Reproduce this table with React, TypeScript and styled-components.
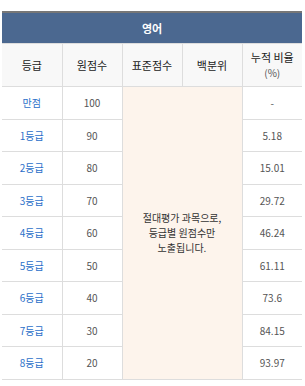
import React from 'react';
import styled, { createGlobalStyle } from 'styled-components';

const GlobalStyle = createGlobalStyle`
    body {
        margin: 0;
        background: #fff;
        font-family: "Noto Sans CJK KR", "Noto Sans", sans-serif;
    }
`

const Wrap = styled.div`
    padding: 11px 0 0 2px;
`

const Table = styled.table`
    width: 300px;
    border-collapse: collapse;
    table-layout: fixed;
    border-top: 2px solid #777;
`

const TitleCell = styled.th`
    height: 30px;
    padding: 0;
    background: #4b6890;
    color: #fff;
    font-size: 11px;
    font-weight: bold;
    text-align: center;
    border-bottom: 1px solid #ddd;
`

const HeadCell = styled.th`
    height: 42px;
    padding: 0;
    background: #f8f8f8;
    color: #222;
    font-size: 11px;
    font-weight: normal;
    line-height: 15px;
    text-align: center;
    border-bottom: 1px solid #ddd;
    & + & {
        border-left: 1px solid #ddd;
    }
`

const Small = styled.span`
    display: block;
    font-size: 10px;
    color: #555;
`

const Cell = styled.td<{ $link?: boolean }>`
    height: 31.5px;
    padding: 0;
    font-size: 10px;
    text-align: center;
    color: ${p => (p.$link ? '#2b6fc9' : '#555')};
    border-bottom: 1px solid #ddd;
    &:not(:first-child) {
        border-left: 1px solid #ddd;
    }
`

const NoteCell = styled.td`
    padding: 0;
    background: #fdf4ec;
    color: #333;
    font-size: 10px;
    line-height: 15px;
    text-align: center;
    border-left: 1px solid #ddd;
    border-bottom: 1px solid #ddd;
`

const rows = [
    { grade: '만점', raw: 100, ratio: '-' },
    { grade: '1등급', raw: 90, ratio: '5.18' },
    { grade: '2등급', raw: 80, ratio: '15.01' },
    { grade: '3등급', raw: 70, ratio: '29.72' },
    { grade: '4등급', raw: 60, ratio: '46.24' },
    { grade: '5등급', raw: 50, ratio: '61.11' },
    { grade: '6등급', raw: 40, ratio: '73.6' },
    { grade: '7등급', raw: 30, ratio: '84.15' },
    { grade: '8등급', raw: 20, ratio: '93.97' },
]

function App() {
    return (
        <Wrap>
            <GlobalStyle/>
            <Table>
                <thead>
                    <tr>
                        <TitleCell colSpan={5}>영어</TitleCell>
                    </tr>
                    <tr>
                        <HeadCell>등급</HeadCell>
                        <HeadCell>원점수</HeadCell>
                        <HeadCell>표준점수</HeadCell>
                        <HeadCell>백분위</HeadCell>
                        <HeadCell>누적 비율<Small>(%)</Small></HeadCell>
                    </tr>
                </thead>
                <tbody>
                    {rows.map((r, i) => (
                        <tr key={r.grade}>
                            <Cell $link>{r.grade}</Cell>
                            <Cell>{r.raw}</Cell>
                            {i === 0 && (
                                <NoteCell colSpan={2} rowSpan={rows.length}>
                                    절대평가 과목으로,<br/>
                                    등급별 원점수만<br/>
                                    노출됩니다.
                                </NoteCell>
                            )}
                            <Cell>{r.ratio}</Cell>
                        </tr>
                    ))}
                </tbody>
            </Table>
        </Wrap>
    );
}

export default App;
